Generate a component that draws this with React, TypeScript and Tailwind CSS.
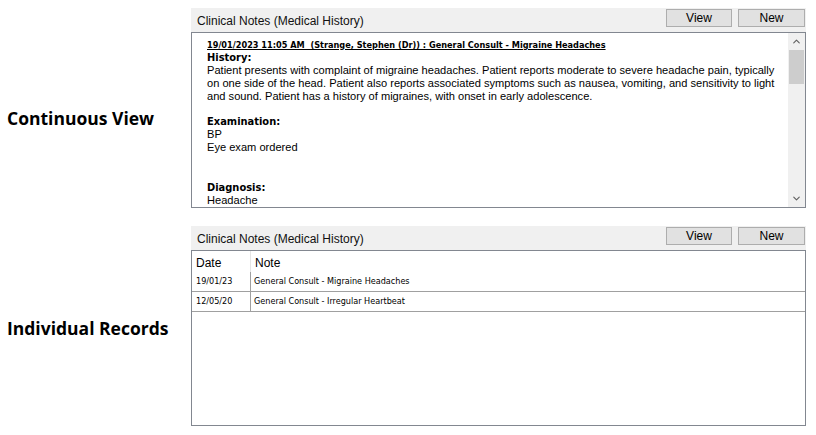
import { ChevronUp, ChevronDown } from 'lucide-react';

const ui = { fontFamily: '"Liberation Sans", Arial, sans-serif' };
const tahoma = { fontFamily: '"DejaVu Sans Condensed", "DejaVu Sans", Verdana, sans-serif' };
const label = { fontFamily: '"Open Sans", "Noto Sans", sans-serif' };

function PanelHeader() {
  return (
    <div className="flex items-center h-[24px] bg-[#f0f0f0] pl-[6px] pr-[1px]" style={ui}>
      <div className="flex-1 text-[12px] text-[#111] pt-[2px]">Clinical Notes (Medical History)</div>
      <div className="flex gap-[6px] self-start pt-[1px]">
        <button className="w-[66px] h-[18px] bg-[#e1e1e1] border border-[#adadad] text-[12px] leading-none text-black">View</button>
        <button className="w-[67px] h-[18px] bg-[#e1e1e1] border border-[#adadad] text-[12px] leading-none text-black">New</button>
      </div>
    </div>
  );
}

function ContinuousPanel() {
  return (
    <div className="w-[615px]">
      <PanelHeader />
      <div className="flex h-[176px] border border-[#828790] bg-white overflow-hidden">
        <div className="flex-1 pl-[15px] pt-[6px] text-black overflow-hidden whitespace-nowrap" style={ui}>
          <div className="text-[9.1px] font-bold underline leading-[12px]" style={tahoma}>
            19/01/2023 11:05 AM&nbsp; (Strange, Stephen (Dr)) : General Consult - Migraine Headaches
          </div>
          <div className="text-[11px] font-bold leading-[13px]" style={tahoma}>History:</div>
          <div className="text-[11.1px] leading-[13px]">
            Patient presents with complaint of migraine headaches. Patient reports moderate to severe headache pain, typically<br />
            on one side of the head. Patient also reports associated symptoms such as nausea, vomiting, and sensitivity to light<br />
            and sound. Patient has a history of migraines, with onset in early adolescence.
          </div>
          <div className="h-[12px]" />
          <div className="text-[11px] font-bold leading-[13px]" style={tahoma}>Examination:</div>
          <div className="text-[11.1px] leading-[13px]">
            BP<br />
            Eye exam ordered
          </div>
          <div className="h-[27px]" />
          <div className="text-[11px] font-bold leading-[13px]" style={tahoma}>Diagnosis:</div>
          <div className="text-[11.1px] leading-[13px]">Headache</div>
        </div>
        <div className="w-[17px] bg-[#f0f0f0] flex flex-col items-center">
          <div className="h-[17px] flex items-center justify-center">
            <ChevronUp size={11} strokeWidth={2.5} className="text-[#606060]" />
          </div>
          <div className="w-[15px] h-[34px] bg-[#cdcdcd]" />
          <div className="flex-1" />
          <div className="h-[17px] flex items-center justify-center">
            <ChevronDown size={11} strokeWidth={2.5} className="text-[#606060]" />
          </div>
        </div>
      </div>
    </div>
  );
}

const rows = [
  { date: '19/01/23', note: 'General Consult - Migraine Headaches' },
  { date: '12/05/20', note: 'General Consult - Irregular Heartbeat' },
];

function RecordsPanel() {
  return (
    <div className="w-[615px]">
      <PanelHeader />
      <div className="h-[176px] border border-[#828790] bg-white overflow-hidden text-black">
        <div className="flex h-[21px] text-[12px]" style={ui}>
          <div className="w-[59px] border-r border-[#e5e5e5] pl-[4px] pt-[3px]">Date</div>
          <div className="flex-1 pl-[4px] pt-[3px]">Note</div>
        </div>
        {rows.map((r) => (
          <div key={r.date} className="flex h-[20px] border-b border-[#a0a0a0] text-[9px] items-center" style={tahoma}>
            <div className="w-[59px] self-stretch flex items-center border-r border-[#a0a0a0] pl-[4px]">{r.date}</div>
            <div className="flex-1 pl-[3px]">{r.note}</div>
          </div>
        ))}
      </div>
    </div>
  );
}

export default function App() {
  return (
    <div className="w-[816px] h-[435px] bg-white pt-[8px]">
      <div className="flex">
        <div className="w-[191px] flex items-center pl-[7px] pt-[20px]">
          <div className="text-[17.5px] font-bold text-black" style={label}>Continuous View</div>
        </div>
        <ContinuousPanel />
      </div>
      <div className="flex mt-[18px]">
        <div className="w-[191px] flex items-center pl-[7px] pt-[4px]">
          <div className="text-[17.5px] font-bold text-black" style={label}>Individual Records</div>
        </div>
        <RecordsPanel />
      </div>
    </div>
  );
}
